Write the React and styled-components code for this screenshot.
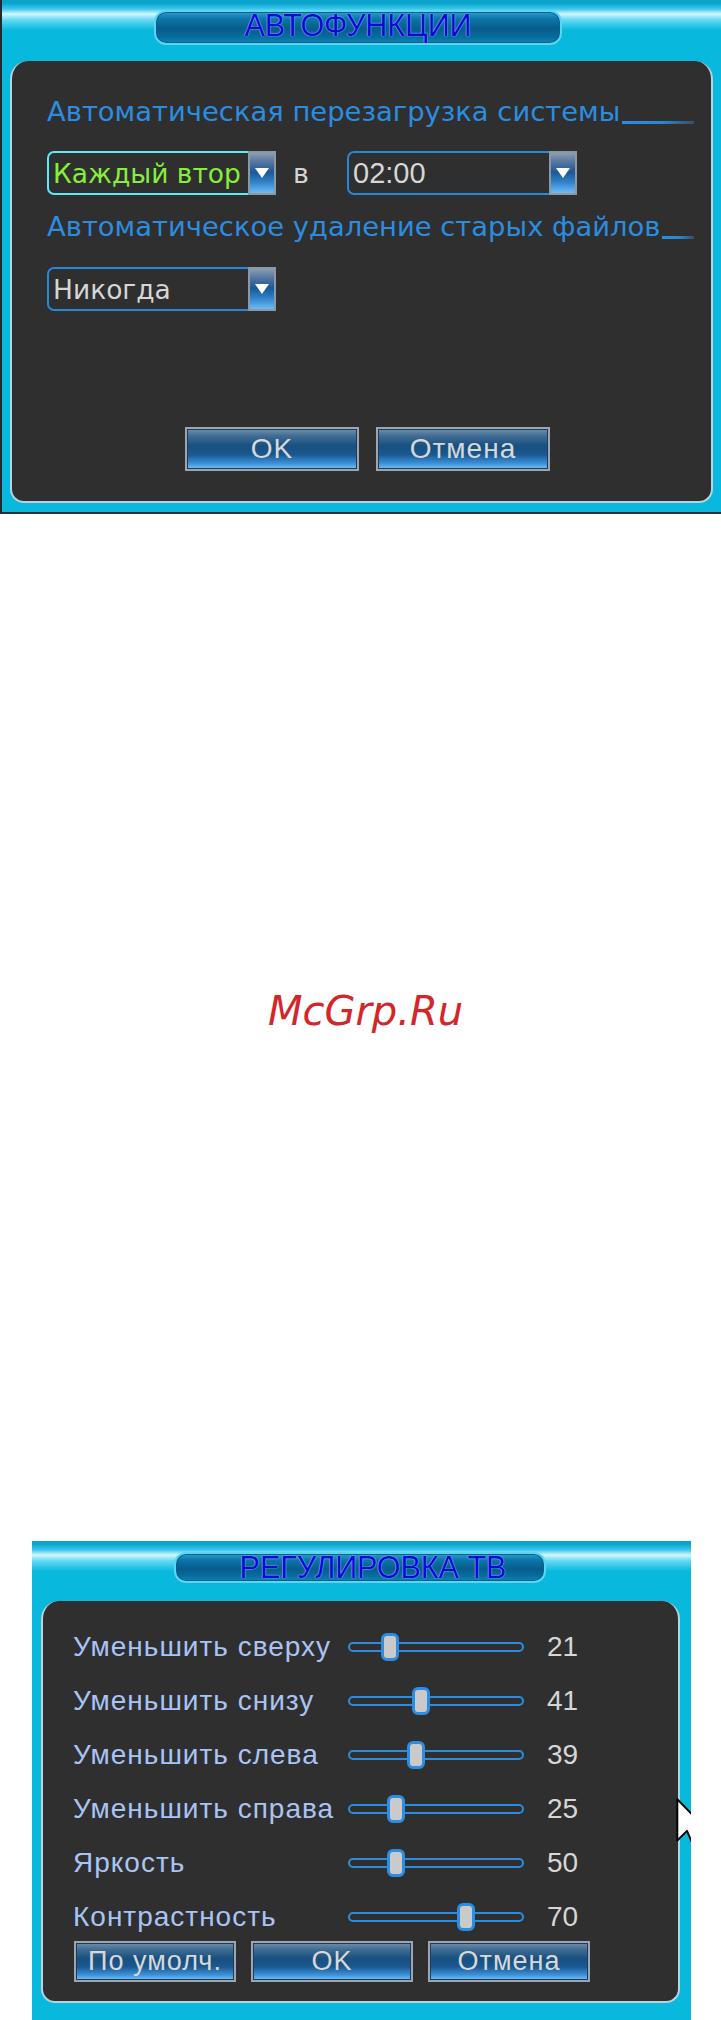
import React from "react";
import styled, { createGlobalStyle, css } from "styled-components";

const GlobalStyle = createGlobalStyle`
  html, body { margin: 0; padding: 0; background: #ffffff; }
  body { font-family: "Liberation Sans", Arial, sans-serif; }
`;

const UI_FONT = `"Liberation Sans", Arial, sans-serif`;
const WIDE_FONT = `"DejaVu Sans", Verdana, sans-serif`;

const Page = styled.div`
  display: flex;
  flex-direction: column;
  width: 721px;
  height: 2020px;
  overflow: hidden;
  background: #ffffff;
`;

/* cyan DVR frame with the glossy streak near its top edge */
const cyanFrame = css`
  background: linear-gradient(
    180deg,
    #0aa3cc 0px,
    #0aa3cc 3px,
    #3cc8ec 9px,
    #d4f6ff 14px,
    #62d8f3 20px,
    #09b9dd 30px,
    #09b9dd 100%
  );
`;

const Dialog = styled.section`
  position: relative;
  box-sizing: border-box;
  display: flex;
  flex-direction: column;
  flex: none;
  overflow: hidden;
  ${cyanFrame}
  width: ${(p) => p.$w}px;
  height: ${(p) => p.$h}px;
  margin-left: ${(p) => p.$left || 0}px;
  border-left: ${(p) => (p.$edge ? "2px solid #1d2b31" : "none")};
  border-bottom: ${(p) => (p.$edge ? "2px solid #26343a" : "none")};
`;

const Header = styled.header`
  display: flex;
  flex: none;
  box-sizing: border-box;
  height: ${(p) => p.$h}px;
  padding-top: ${(p) => p.$top}px;
  padding-left: ${(p) => p.$left}px;
`;

const TitleBar = styled.div`
  box-sizing: border-box;
  width: ${(p) => p.$w}px;
  height: ${(p) => p.$h}px;
  border: 2px solid #5ad6f2;
  border-radius: 12px;
  background: linear-gradient(
    180deg,
    #2a9fcf 0%,
    #0c76a8 22%,
    #075c8c 55%,
    #086c9e 80%,
    #0c84b6 100%
  );
  box-shadow: inset 0 0 0 1px #0a5f8d;
  display: flex;
  align-items: center;
  justify-content: center;
  padding-bottom: ${(p) => p.$lift || 0}px;
  padding-left: ${(p) => p.$shift || 0}px;
  color: #0b0bd6;
  font-family: ${UI_FONT};
  font-size: ${(p) => p.$fs}px;
  line-height: 1;
  text-shadow: 0 0 1px #9fd4ff, 0 0 1px #9fd4ff;
  white-space: nowrap;
`;

const Panel = styled.div`
  box-sizing: border-box;
  flex: 1;
  display: flex;
  flex-direction: column;
  margin: ${(p) => p.$margin};
  padding: ${(p) => p.$pad};
  background: #2f2f2f;
  border: 2px solid #b9d3de;
  border-top: none;
  border-radius: 18px 18px 14px 14px;
`;

/* ---------- auto functions dialog ---------- */

const SectionLabel = styled.div`
  display: flex;
  align-items: flex-end;
  height: 36px;
  margin-top: ${(p) => p.$mt || 0}px;
  color: #2b8de0;
  font-family: ${WIDE_FONT};
  font-size: 27.4px;
  line-height: 36px;
  white-space: nowrap;
`;

const LabelText = styled.span`
  flex: none;
`;

const TrailLine = styled.span`
  flex: 1;
  height: 3px;
  margin: 0 0 6px 2px;
  background: linear-gradient(90deg, #2a8ee0 0%, #2a86d4 55%, #3a4f62 100%);
`;

const SelectRow = styled.div`
  display: flex;
  align-items: center;
  margin-top: ${(p) => p.$mt || 0}px;
`;

const Select = styled.div`
  display: flex;
  flex: none;
  width: ${(p) => p.$w}px;
  height: 44px;
`;

const SelectField = styled.div`
  flex: 1;
  box-sizing: border-box;
  display: flex;
  align-items: center;
  padding-left: 4px;
  overflow: hidden;
  white-space: nowrap;
  border: 2px solid ${(p) => (p.$focused ? "#63e6f6" : "#2a86d6")};
  border-right: none;
  border-radius: 7px 0 0 7px;
  color: ${(p) => (p.$focused ? "#86ee3c" : "#d6d6d6")};
  font-family: ${(p) => (p.$digits ? UI_FONT : WIDE_FONT)};
  font-size: ${(p) => (p.$digits ? 29 : 26.5)}px;
`;

const ArrowButton = styled.span`
  flex: none;
  box-sizing: border-box;
  width: 28px;
  display: flex;
  align-items: center;
  justify-content: center;
  border: 2px solid #8c98a4;
  background: linear-gradient(
    180deg,
    #8a9db2 0%,
    #5676a0 22%,
    #1c5896 48%,
    #2f80c8 72%,
    #6cbdf6 100%
  );
`;

const Word = styled.span`
  flex: none;
  width: 16px;
  margin: 0 38px 0 17px;
  color: #d4d4d4;
  font-family: ${WIDE_FONT};
  font-size: 27px;
`;

const ButtonRow = styled.div`
  display: flex;
  gap: ${(p) => p.$gap}px;
  margin-top: ${(p) => p.$mt}px;
  margin-left: ${(p) => p.$ml}px;
`;

const Button = styled.button`
  box-sizing: border-box;
  flex: none;
  width: ${(p) => p.$w}px;
  height: ${(p) => p.$h}px;
  padding: 0;
  border: 2px solid #9ea5ac;
  background: linear-gradient(
    180deg,
    #718fa8 0%,
    #3f6c93 18%,
    #18507f 42%,
    #1a5890 64%,
    #3b90d8 86%,
    #74c2fa 100%
  );
  box-shadow: inset 0 0 0 1px #1b3c60;
  color: #d8d8d8;
  font-family: ${UI_FONT};
  font-size: ${(p) => p.$fs}px;
  letter-spacing: 1px;
  line-height: 1;
  white-space: nowrap;
`;

/* ---------- watermark ---------- */

const Gap = styled.div`
  flex: none;
  box-sizing: border-box;
  height: 1027px;
  padding: 474px 0 0 10px;
  text-align: center;
`;

const Watermark = styled.span`
  color: #d3262a;
  font-family: "DejaVu Sans", sans-serif;
  font-style: oblique;
  font-size: 40px;
  line-height: 46px;
`;

/* ---------- TV adjustment dialog ---------- */

const SliderList = styled.div`
  display: flex;
  flex-direction: column;
  gap: 12px;
`;

const SliderRow = styled.div`
  display: grid;
  grid-template-columns: 275px 176px auto;
  align-items: center;
  height: 42px;
`;

const SliderLabel = styled.span`
  color: #a9c4f4;
  font-family: ${UI_FONT};
  font-size: 28px;
  letter-spacing: 1px;
  white-space: nowrap;
`;

const Track = styled.div`
  position: relative;
  box-sizing: border-box;
  width: 176px;
  height: 10px;
  border: 2.5px solid #2b8ce0;
  border-radius: 6px;
  background: #2f2f2f;
`;

const Thumb = styled.span`
  position: absolute;
  top: 50%;
  box-sizing: border-box;
  width: 18px;
  height: 28px;
  transform: translate(-50%, -50%);
  border: 3px solid #2b8ee2;
  border-radius: 6px;
  background: #cacaca;
`;

const SliderValue = styled.span`
  margin-left: 23px;
  color: #d6d6d6;
  font-family: ${UI_FONT};
  font-size: 28px;
`;

const Cursor = styled.svg`
  position: absolute;
  left: 644px;
  top: 257px;
  width: 31px;
  height: 49px;
  pointer-events: none;
`;

const DownArrow = () => (
  <svg width="14" height="12" viewBox="0 0 14 12">
    <polygon points="0,1 14,1 7,11" fill="#ffffff" />
  </svg>
);

const sliders = [
  { label: "Уменьшить сверху", value: 21, pos: 0.233 },
  { label: "Уменьшить снизу", value: 41, pos: 0.41 },
  { label: "Уменьшить слева", value: 39, pos: 0.386 },
  { label: "Уменьшить справа", value: 25, pos: 0.267 },
  { label: "Яркость", value: 50, pos: 0.267 },
  { label: "Контрастность", value: 70, pos: 0.676 },
];

export default function App() {
  return (
    <Page>
      <GlobalStyle />

      <Dialog $w={721} $h={514} $edge>
        <Header $h={61} $top={10} $left={152}>
          <TitleBar $w={408} $h={35} $fs={30.5} $lift={5}>
            АВТОФУНКЦИИ
          </TitleBar>
        </Header>
        <Panel $margin="0 8px 9px 8px" $pad="33px 17px 0 35px">
          <SectionLabel>
            <LabelText>Автоматическая перезагрузка системы</LabelText>
            <TrailLine />
          </SectionLabel>
          <SelectRow $mt={21}>
            <Select $w={229}>
              <SelectField $focused>Каждый втор</SelectField>
              <ArrowButton>
                <DownArrow />
              </ArrowButton>
            </Select>
            <Word>в</Word>
            <Select $w={230}>
              <SelectField $digits>02:00</SelectField>
              <ArrowButton>
                <DownArrow />
              </ArrowButton>
            </Select>
          </SelectRow>
          <SectionLabel $mt={14}>
            <LabelText>Автоматическое удаление старых файлов</LabelText>
            <TrailLine />
          </SectionLabel>
          <SelectRow $mt={22}>
            <Select $w={229}>
              <SelectField>Никогда</SelectField>
              <ArrowButton>
                <DownArrow />
              </ArrowButton>
            </Select>
          </SelectRow>
          <ButtonRow $gap={17} $mt={116} $ml={138}>
            <Button $w={174} $h={44} $fs={28}>OK</Button>
            <Button $w={174} $h={44} $fs={28}>Отмена</Button>
          </ButtonRow>
        </Panel>
      </Dialog>

      <Gap>
        <Watermark>McGrp.Ru</Watermark>
      </Gap>

      <Dialog $w={659} $h={479} $left={32}>
        <Header $h={60} $top={11} $left={142}>
          <TitleBar $w={372} $h={31} $fs={30.5} $lift={1} $shift={26}>
            РЕГУЛИРОВКА ТВ
          </TitleBar>
        </Header>
        <Panel $margin="0 11px 17px 9px" $pad="25px 0 0 30px">
          <SliderList>
            {sliders.map((s) => (
              <SliderRow key={s.label}>
                <SliderLabel>{s.label}</SliderLabel>
                <Track>
                  <Thumb style={{ left: `${s.pos * 100}%` }} />
                </Track>
                <SliderValue>{s.value}</SliderValue>
              </SliderRow>
            ))}
          </SliderList>
          <ButtonRow $gap={15} $mt={3} $ml={1}>
            <Button $w={162} $h={41} $fs={27}>По умолч.</Button>
            <Button $w={162} $h={41} $fs={27}>OK</Button>
            <Button $w={162} $h={41} $fs={27}>Отмена</Button>
          </ButtonRow>
        </Panel>
        <Cursor viewBox="0 0 24 38">
          <path
            d="M1 1 L1 33 L8.5 25.5 L13.5 37 L18 35 L13 23.5 L23 23.5 Z"
            fill="#ffffff"
            stroke="#000000"
            strokeWidth="1.5"
            strokeLinejoin="round"
          />
        </Cursor>
      </Dialog>
    </Page>
  );
}
